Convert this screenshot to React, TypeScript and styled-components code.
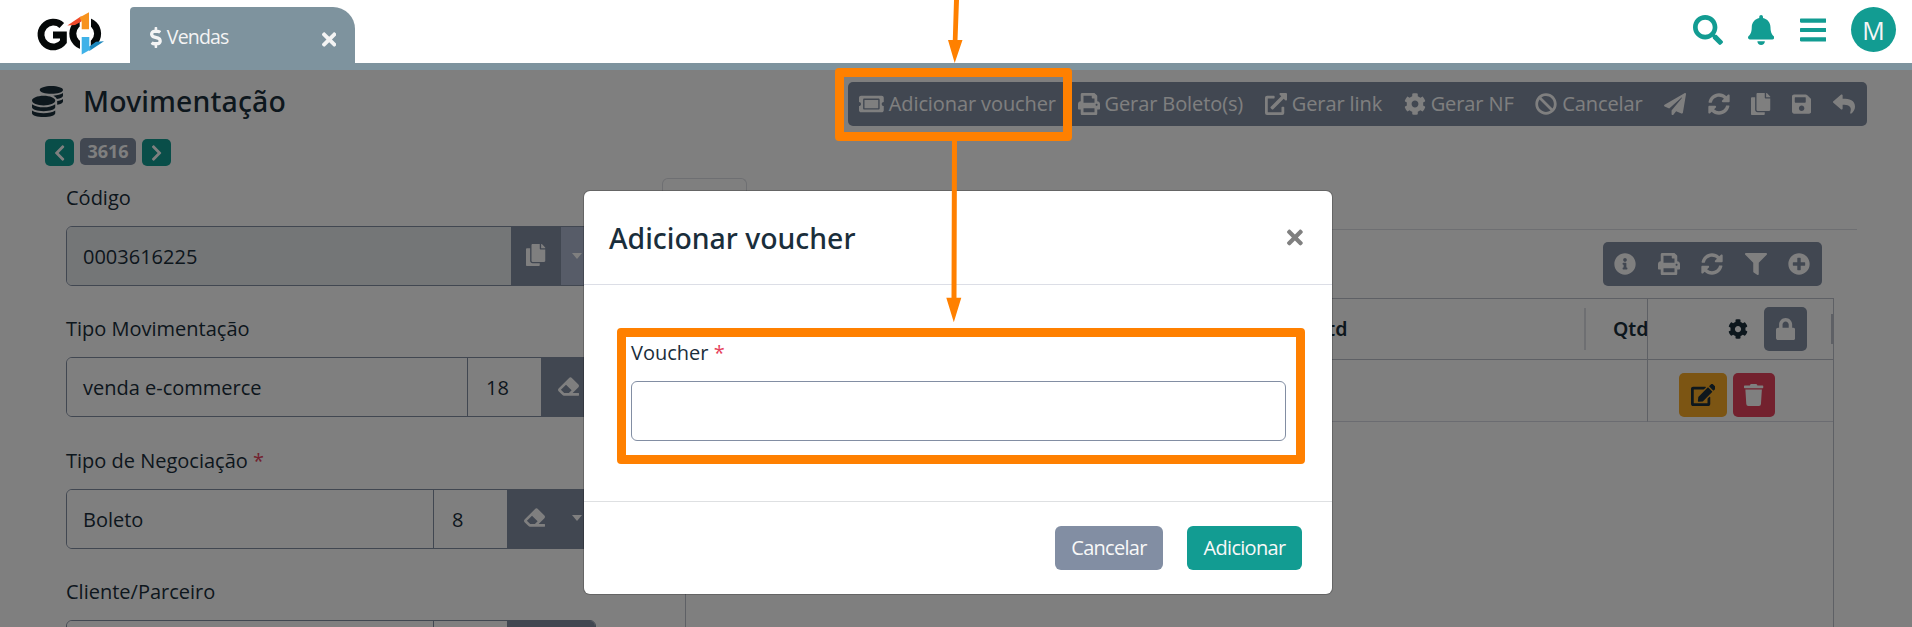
import React from "react";
import styled, { createGlobalStyle, css } from "styled-components";
import {
  FaTicketAlt, FaPrint, FaExternalLinkAlt, FaCog, FaBan, FaPaperPlane, FaSyncAlt, FaCopy, FaSave,
  FaReply, FaCoins, FaEraser, FaEdit, FaTrash, FaLock, FaInfoCircle, FaFilter, FaPlusCircle,
  FaBars, FaBell, FaSearch, FaDollarSign, FaTimes, FaChevronLeft, FaChevronRight,
} from "react-icons/fa";

const color = {
  ink: "#1a2e3b",
  slate: "#828ea3",
  steel: "#7e939e",
  teal: "#129c92",
  orange: "#ff8000",
  line: "#bcc0ca",
};

const GlobalStyle = createGlobalStyle`
  * { box-sizing: border-box; }
  body {
    margin: 0;
    background: #fff;
    color: ${color.ink};
    font-family: "Open Sans", "Noto Sans", sans-serif;
    font-size: 20px;
    line-height: 30px;
    overflow: hidden;
  }
  svg { display: block; flex: none; }
`;

const Page = styled.div`
  position: relative;
  display: flex;
  flex-direction: column;
  height: 627px;
  overflow: hidden;
`;

const Header = styled.header`
  display: flex;
  align-items: flex-end;
  flex: none;
  height: 70px;
  border-bottom: 7px solid ${color.steel};
`;

const LogoLink = styled.a`
  align-self: flex-start;
  width: 130px;
  height: 63px;
`;

const Tab = styled.div`
  display: flex;
  align-items: center;
  width: 225px;
  height: 56px;
  padding: 4px 19px 0 20px;
  border-radius: 4px 22px 0 0;
  background: ${color.steel};
  color: #f4f4f4;
  font-size: 19.5px;
  letter-spacing: -0.8px;
`;

const TabTitle = styled.span`
  flex: 1;
  margin-left: 5px;
`;

const HeaderActions = styled.div`
  display: flex;
  align-items: center;
  align-self: flex-start;
  margin: 7px 16px 0 auto;
  color: ${color.teal};
`;

const Avatar = styled.div`
  width: 45px;
  height: 45px;
  margin-left: 25px;
  border-radius: 50%;
  background: ${color.teal};
  color: #f6f6f6;
  font-size: 25px;
  line-height: 47px;
  text-align: center;
`;

/* $w is the glyph's advance width on the icon font's 512-unit height */
const Icon = styled.span<{ $h?: number; $w?: number; $ml?: number; $mt?: number }>`
  display: inline-flex;
  margin-left: ${(p) => p.$ml ?? 0}px;
  margin-top: ${(p) => p.$mt ?? 0}px;
  svg {
    height: ${(p) => p.$h ?? 22}px;
    width: ${(p) => ((p.$h ?? 22) * (p.$w ?? 512)) / 512}px;
  }
`;

const Main = styled.main`
  flex: 1;
  min-height: 0;
`;

const PageHead = styled.div`
  display: flex;
  justify-content: space-between;
  height: 108px;
  padding: 11px 45px 0 32px;
`;

const TitleRow = styled.div`
  display: flex;
  align-items: center;
  height: 40px;
`;

const PageTitle = styled.h1`
  margin: 0 0 0 20px;
  font: 500 28.4px/40px "Noto Sans", sans-serif;
  letter-spacing: 0.15px;
`;

const Pager = styled.div`
  display: flex;
  gap: 6px;
  margin: 17px 0 0 13px;
`;

const PagerButton = styled.button`
  display: flex;
  align-items: center;
  justify-content: center;
  width: 29px;
  height: 27px;
  margin-top: 1px;
  padding: 0;
  border: 0;
  border-radius: 5px;
  background: ${color.teal};
  color: #fff;
`;

const PagerBadge = styled.span`
  width: 56px;
  height: 27px;
  border-radius: 5px;
  background: ${color.slate};
  color: #fff;
  font-size: 18px;
  font-weight: 700;
  line-height: 27px;
  text-align: center;
`;

const Toolbar = styled.div<{ $width: number }>`
  display: flex;
  align-items: center;
  justify-content: space-between;
  width: ${(p) => p.$width}px;
  height: 44px;
  padding: 0 12px 0 11px;
  border-radius: 5px;
  background: ${color.slate};
  color: #fff;
`;

const PageToolbar = styled(Toolbar)`
  margin-top: 1px;
`;

const ToolItem = styled.span`
  display: flex;
  align-items: center;
  gap: 5px;
  letter-spacing: -0.1px;
  white-space: nowrap;
`;

const Content = styled.div`
  display: flex;
`;

const Form = styled.form`
  width: 662px;
  padding: 5px 66px 0 66px;
`;

const Field = styled.div`
  margin-bottom: 28.3px;
`;

const Label = styled.label`
  display: block;
  margin-bottom: 13px;
`;

const Required = styled.span`
  color: #e6425c;
`;

const InputGroup = styled.div`
  display: flex;
  height: 60px;
  border: 1px solid ${color.slate};
  border-radius: 6px;
  overflow: hidden;
`;

const InputText = styled.div<{ $disabled?: boolean }>`
  flex: 1;
  padding: 15px 0 0 16px;
  background: ${(p) => (p.$disabled ? "#e9ecef" : "#fff")};
`;

const InputCode = styled.div`
  width: 74px;
  padding: 15px 0 0 18px;
  border-left: 1px solid ${color.slate};
`;

const InputButton = styled.div<{ $width: number; $muted?: boolean }>`
  display: flex;
  align-items: center;
  justify-content: center;
  width: ${(p) => p.$width}px;
  margin: -1px 0;
  padding-bottom: 2px;
  background: ${(p) => (p.$muted ? "#aeb9d0" : color.slate)};
  color: #fff;
`;

const Caret = styled.span`
  margin: 1px 0 0 -3px;
  border: 5.5px solid transparent;
  border-top: 6px solid #fff;
  border-bottom: 0;
`;

const Panel = styled.section`
  display: flex;
  flex-direction: column;
  width: 1195px;
`;

const PanelTabs = styled.div`
  height: 52px;
  border-bottom: 1px solid #dcdee4;
`;

const PanelTab = styled.div`
  width: 85px;
  height: 52px;
  border: 1px solid #dcdee4;
  border-bottom-color: #fff;
  border-radius: 6px 6px 0 0;
`;

const PanelTools = styled.div`
  display: flex;
  justify-content: flex-end;
  padding: 12px 35px;
`;

const Table = styled.div`
  display: grid;
  grid-template-columns: 1fr 186px;
  grid-template-rows: 61px 62px 240px;
  width: 1149px;
  margin-left: 23px;
  border: 1px solid ${color.line};
  border-bottom: 0;
`;

const HeadCells = styled.div`
  display: flex;
  align-items: center;
  justify-content: flex-end;
  border-bottom: 1px solid ${color.line};
  overflow: hidden;
  font: 600 19.5px/30px "Noto Sans", sans-serif;
`;

const HeadCell = styled.div<{ $width: number }>`
  width: ${(p) => p.$width}px;
`;

const CellDivider = styled.span`
  width: 2px;
  height: 42px;
  margin-right: 27px;
  background: #dcdee4;
`;

const HeadActions = styled.div`
  display: flex;
  align-items: center;
  justify-content: flex-end;
  border-left: 1px solid ${color.line};
  border-bottom: 1px solid ${color.line};
`;

const RowCells = styled.div`
  border-bottom: 1px solid #d7d9e2;
`;

const RowActions = styled(RowCells)`
  display: flex;
  gap: 6px;
  padding: 13px 0 0 31px;
  border-left: 1px solid ${color.line};
`;

const tone = {
  slate: css`background: ${color.slate}; color: #fff;`,
  amber: css`background: #f8aa26; color: ${color.ink};`,
  red: css`background: #e6425c; color: #fff;`,
};

const SquareButton = styled.button<{ $tone: keyof typeof tone; $width: number }>`
  display: flex;
  align-items: center;
  justify-content: center;
  width: ${(p) => p.$width}px;
  height: 44px;
  padding: 0;
  border: 0;
  border-radius: 5px;
  ${(p) => tone[p.$tone]}
`;

const RightGrip = styled.span`
  width: 2px;
  height: 30px;
  margin-left: 24px;
  background: #bcc0ca;
`;

const Backdrop = styled.div`
  position: absolute;
  inset: 70px 0 0 0;
  background: rgba(0, 0, 0, 0.5);
`;

const Dialog = styled.div`
  position: absolute;
  left: 584px;
  top: 191px;
  display: flex;
  flex-direction: column;
  width: 748px;
  height: 403px;
  border-radius: 6px;
  background: #fff;
  box-shadow: 0 0 0 1px rgba(0, 0, 0, 0.2);
`;

const DialogHeader = styled.div`
  display: flex;
  align-items: center;
  justify-content: space-between;
  height: 94px;
  padding: 0 29px 0 25px;
  border-bottom: 1px solid #dcdee6;
  color: #808080;
`;

const DialogTitle = styled.h2`
  margin: 1px 0 0;
  color: ${color.ink};
  font: 500 28.4px/40px "Noto Sans", sans-serif;
`;

const DialogBody = styled.div`
  flex: 1;
  padding: 53px 46px 0 47px;
`;

const VoucherInput = styled.input`
  display: block;
  width: 100%;
  height: 60px;
  border: 1px solid ${color.slate};
  border-radius: 6px;
  background: #fff;
`;

const DialogFooter = styled.div`
  display: flex;
  justify-content: flex-end;
  gap: 24px;
  height: 93px;
  padding: 24px 30px 0;
  border-top: 1px solid #dee0e2;
`;

const DialogButton = styled.button<{ $primary?: boolean }>`
  width: ${(p) => (p.$primary ? 115 : 108)}px;
  height: 44px;
  padding: 0;
  border: 0;
  border-radius: 6px;
  background: ${(p) => (p.$primary ? color.teal : color.slate)};
  color: #f8f8f8;
  font: 400 20px/44px "Open Sans", sans-serif;
  letter-spacing: -0.7px;
`;

const Highlight = styled.div<{ $x: number; $y: number; $w: number; $h: number }>`
  position: absolute;
  left: ${(p) => p.$x}px;
  top: ${(p) => p.$y}px;
  width: ${(p) => p.$w}px;
  height: ${(p) => p.$h}px;
  border: 9px solid ${color.orange};
  border-radius: 4px;
`;

const Arrows = styled.svg`
  position: absolute;
  left: 940px;
  top: 0;
`;

const Logo = () => (
  <svg width="130" height="63" viewBox="0 0 130 63">
    <path d="M61.8 25.4 A12.4 12.4 0 1 0 63.4 41.8 V35 H53" fill="none" stroke="#050808" strokeWidth="6.8" />
    <ellipse cx="85.2" cy="33.6" rx="12.4" ry="12.6" fill="none" stroke="#050808" strokeWidth="7" />
    <path d="M79.7 15 H91 V31 H79.7Z M80 36 H90.8 V52 H80Z" fill="#fff" />
    <path d="M67.3 25.5 L81.5 16 V21.5 L75 25Z" fill="#f0492a" />
    <path d="M79.5 17.5 L89 12.2 V29.3 H81.7 V21.5Z" fill="#f7931e" />
    <path d="M104 41.3 L89.3 51 V46.5 L96 41.8Z" fill="#1b87bd" />
    <path d="M81.7 37 H89.3 V46 L91 49.3 L81.7 54.5Z" fill="#3fb2e8" />
  </svg>
);

type Tool = { icon: React.ReactNode; label?: string; width?: number };

const pageTools: Tool[] = [
  { icon: <FaTicketAlt />, label: "Adicionar voucher", width: 576 },
  { icon: <FaPrint />, label: "Gerar Boleto(s)" },
  { icon: <FaExternalLinkAlt />, label: "Gerar link" },
  { icon: <FaCog />, label: "Gerar NF" },
  { icon: <FaBan />, label: "Cancelar" },
  { icon: <FaPaperPlane /> },
  { icon: <FaSyncAlt /> },
  { icon: <FaCopy />, width: 448 },
  { icon: <FaSave />, width: 448 },
  { icon: <FaReply /> },
];

const tableTools = [<FaInfoCircle />, <FaPrint />, <FaSyncAlt />, <FaFilter />, <FaPlusCircle />];

export default function App() {
  return (
    <Page>
      <GlobalStyle />
      <Header>
        <LogoLink><Logo /></LogoLink>
        <Tab>
          <Icon $h={21} $w={288}><FaDollarSign /></Icon>
          <TabTitle>Vendas</TabTitle>
          <Icon $h={21} $w={352} $mt={4}><FaTimes /></Icon>
        </Tab>
        <HeaderActions>
          <Icon $h={30}><FaSearch /></Icon>
          <Icon $h={30} $w={448} $ml={25}><FaBell /></Icon>
          <Icon $h={30} $w={448} $ml={26}><FaBars /></Icon>
          <Avatar>M</Avatar>
        </HeaderActions>
      </Header>

      <Main>
        <PageHead>
          <div>
            <TitleRow>
              <Icon $h={31}><FaCoins /></Icon>
              <PageTitle>Movimentação</PageTitle>
            </TitleRow>
            <Pager>
              <PagerButton><Icon $h={18} $w={320}><FaChevronLeft /></Icon></PagerButton>
              <PagerBadge>3616</PagerBadge>
              <PagerButton><Icon $h={18} $w={320}><FaChevronRight /></Icon></PagerButton>
            </Pager>
          </div>
          <PageToolbar $width={1019}>
            {pageTools.map(({ icon, label, width }, i) => (
              <ToolItem key={i}><Icon $w={width}>{icon}</Icon>{label}</ToolItem>
            ))}
          </PageToolbar>
        </PageHead>

        <Content>
          <Form>
            <Field>
              <Label>Código</Label>
              <InputGroup>
                <InputText $disabled>0003616225</InputText>
                <InputButton $width={50}><Icon $w={448}><FaCopy /></Icon></InputButton>
                <InputButton $width={34} $muted><Caret /></InputButton>
              </InputGroup>
            </Field>
            <Field>
              <Label>Tipo Movimentação</Label>
              <InputGroup>
                <InputText>venda e-commerce</InputText>
                <InputCode>18</InputCode>
                <InputButton $width={54}><Icon $h={21}><FaEraser /></Icon></InputButton>
              </InputGroup>
            </Field>
            <Field>
              <Label>Tipo de Negociação <Required>*</Required></Label>
              <InputGroup>
                <InputText>Boleto</InputText>
                <InputCode>8</InputCode>
                <InputButton $width={54}><Icon $h={21}><FaEraser /></Icon></InputButton>
                <InputButton $width={34}><Caret /></InputButton>
              </InputGroup>
            </Field>
            <Field>
              <Label>Cliente/Parceiro</Label>
              <InputGroup>
                <InputText />
                <InputCode />
                <InputButton $width={88} />
              </InputGroup>
            </Field>
          </Form>

          <Panel>
            <PanelTabs><PanelTab /></PanelTabs>
            <PanelTools>
              <Toolbar $width={219}>
                {tableTools.map((icon, i) => <Icon key={i}>{icon}</Icon>)}
              </Toolbar>
            </PanelTools>
            <Table>
              <HeadCells>
                <HeadCell $width={272}>Qtd</HeadCell>
                <CellDivider />
                <HeadCell $width={34}>Qtd</HeadCell>
              </HeadCells>
              <HeadActions>
                <Icon $h={20}><FaCog /></Icon>
                <Icon $w={448} $ml={16}>
                  <SquareButton $tone="slate" $width={43}><FaLock /></SquareButton>
                </Icon>
                <RightGrip />
              </HeadActions>
              <RowCells />
              <RowActions>
                <Icon $w={576}><SquareButton $tone="amber" $width={48}><FaEdit /></SquareButton></Icon>
                <Icon $w={448}><SquareButton $tone="red" $width={42}><FaTrash /></SquareButton></Icon>
              </RowActions>
            </Table>
          </Panel>
        </Content>
      </Main>

      <Backdrop />
      <Dialog role="dialog">
        <DialogHeader>
          <DialogTitle>Adicionar voucher</DialogTitle>
          <Icon $h={23} $w={352}><FaTimes /></Icon>
        </DialogHeader>
        <DialogBody>
          <Label>Voucher <Required>*</Required></Label>
          <VoucherInput />
        </DialogBody>
        <DialogFooter>
          <DialogButton>Cancelar</DialogButton>
          <DialogButton $primary>Adicionar</DialogButton>
        </DialogFooter>
      </Dialog>

      <Highlight $x={835} $y={68} $w={237} $h={73} />
      <Highlight $x={617} $y={328} $w={688} $h={136} />
      <Arrows width="30" height="330" viewBox="0 0 30 330" fill={color.orange}>
        <path d="M14 0 H19 L17.5 40 H22.5 L14.7 63 L8 40 H12.8Z" />
        <path d="M12 140 H17 L16.5 297.7 H21.3 L13.8 322.3 L6.3 297.7 H11.5Z" />
      </Arrows>
    </Page>
  );
}
